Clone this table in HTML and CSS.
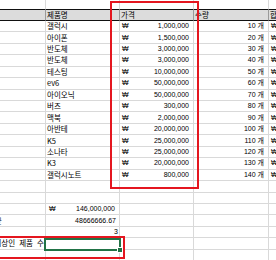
FILE: index.html
```html
<!DOCTYPE html>
<html lang="ko">
<head>
<meta charset="utf-8">
<link rel="stylesheet" href="styles.css">
</head>
<body>
<div class="wrap">
  <div class="sheet">
    <div class="c t"></div><div class="c t"></div><div class="c t"></div><div class="c t"></div><div class="c t"></div>

    <div class="c h"></div><div class="c h k">제품명</div><div class="c h k">가격</div><div class="c h k">수량</div><div class="c h k">합</div>

    <div class="c"></div><div class="c k">갤럭시</div><div class="c acc"><span>₩</span><span>1,000,000</span></div><div class="c qty">10 개</div><div class="c w">₩</div>
    <div class="c"></div><div class="c k">아이폰</div><div class="c acc"><span>₩</span><span>1,500,000</span></div><div class="c qty">20 개</div><div class="c w">₩</div>
    <div class="c"></div><div class="c k">반도체</div><div class="c acc"><span>₩</span><span>3,000,000</span></div><div class="c qty">30 개</div><div class="c w">₩</div>
    <div class="c"></div><div class="c k">반도체</div><div class="c acc"><span>₩</span><span>3,000,000</span></div><div class="c qty">40 개</div><div class="c w">₩</div>
    <div class="c"></div><div class="c k">테스팅</div><div class="c acc"><span>₩</span><span>10,000,000</span></div><div class="c qty">50 개</div><div class="c w">₩</div>
    <div class="c"></div><div class="c k">ev6</div><div class="c acc"><span>₩</span><span>50,000,000</span></div><div class="c qty">60 개</div><div class="c w">₩</div>
    <div class="c"></div><div class="c k">아이오닉</div><div class="c acc"><span>₩</span><span>50,000,000</span></div><div class="c qty">70 개</div><div class="c w">₩</div>
    <div class="c"></div><div class="c k">버즈</div><div class="c acc"><span>₩</span><span>300,000</span></div><div class="c qty">80 개</div><div class="c w">₩</div>
    <div class="c"></div><div class="c k">맥북</div><div class="c acc"><span>₩</span><span>2,000,000</span></div><div class="c qty">90 개</div><div class="c w">₩</div>
    <div class="c"></div><div class="c k">아반테</div><div class="c acc"><span>₩</span><span>20,000,000</span></div><div class="c qty">100 개</div><div class="c w">₩</div>
    <div class="c"></div><div class="c k">K5</div><div class="c acc"><span>₩</span><span>25,000,000</span></div><div class="c qty">110 개</div><div class="c w">₩</div>
    <div class="c"></div><div class="c k">소나타</div><div class="c acc"><span>₩</span><span>25,000,000</span></div><div class="c qty">120 개</div><div class="c w">₩</div>
    <div class="c"></div><div class="c k">K3</div><div class="c acc"><span>₩</span><span>20,000,000</span></div><div class="c qty">130 개</div><div class="c w">₩</div>
    <div class="c"></div><div class="c k">갤럭시노트</div><div class="c acc"><span>₩</span><span>800,000</span></div><div class="c qty">140 개</div><div class="c w">₩</div>

    <div class="c"></div><div class="c"></div><div class="c"></div><div class="c"></div><div class="c"></div>
    <div class="c"></div><div class="c"></div><div class="c"></div><div class="c"></div><div class="c"></div>

    <div class="c"></div><div class="c acc2"><span>₩</span><span>146,000,000</span></div><div class="c"></div><div class="c"></div><div class="c"></div>
    <div class="c"><span class="k cut">평균</span></div><div class="c num">48666666.67</div><div class="c"></div><div class="c"></div><div class="c"></div>
    <div class="c"></div><div class="c gen">3</div><div class="c"></div><div class="c"></div><div class="c"></div>
    <div class="c ra k wide">천만원 이상인 제품 수</div><div class="c"></div><div class="c"></div><div class="c"></div><div class="c"></div>
    <div class="c"></div><div class="c"></div><div class="c"></div><div class="c"></div><div class="c"></div>
  </div>

  <div class="mark mark-price"></div>
  <div class="mark mark-count"></div>
  <div class="sel"><span class="handle"></span></div>
</div>
</body>
</html>
```

FILE: styles.css
```css
html, body {
  margin: 0;
  padding: 0;
  background: #fff;
}

body {
  width: 276px;
  height: 260px;
  overflow: hidden;
}

.wrap {
  position: relative;
  width: 276px;
  height: 260px;
  overflow: hidden;
  font-family: "Liberation Sans", "Noto Sans CJK KR", sans-serif;
  font-size: 7px;
  color: #000;
}

.sheet {
  display: grid;
  grid-template-columns: 46px 74px 74px 75px 74px;
  grid-template-rows: 11.5px;
  grid-auto-rows: 11.45px;
  margin-top: -2px;
  width: 343px;
}

.c {
  box-sizing: border-box;
  border-right: 1px solid #d9d9d9;
  border-bottom: 1px solid #d9d9d9;
  display: flex;
  align-items: center;
  white-space: nowrap;
  padding: 0 1px;
  min-width: 0;
  line-height: 10px;
}

.t {
  border-bottom-color: #111;
}

.h {
  background: #dcdcdc;
  border-bottom-color: #111;
  border-right-color: #9a9a9a;
  padding-left: 1px;
}

.k {
  font-family: "Noto Sans CJK KR", "Liberation Sans", sans-serif;
  font-size: 7.5px;
}

.acc {
  justify-content: space-between;
  padding: 0 4px 0 2px;
}

.acc2 {
  justify-content: space-between;
  padding: 0 4px 0 3px;
}

.qty {
  justify-content: flex-end;
  padding-right: 4px;
}

.num {
  justify-content: flex-end;
  padding-right: 3px;
}

.gen {
  justify-content: flex-end;
  padding-right: 1px;
}

.ra {
  justify-content: flex-end;
  padding-right: 1px;
}

.wide {
  word-spacing: 2px;
}

.w {
  padding-left: 2px;
}

.cut {
  margin-left: -13px;
  color: #2b3550;
}

.mark {
  position: absolute;
  box-sizing: border-box;
  border: 2px solid #e4161f;
}

.mark-price {
  left: 110px;
  top: 1px;
  width: 89px;
  height: 188px;
}

.mark-count {
  left: -6px;
  top: 236px;
  width: 131px;
  height: 23px;
}

.sel {
  position: absolute;
  box-sizing: border-box;
  left: 44px;
  top: 238px;
  width: 77px;
  height: 13px;
  border: 2px solid #217346;
}

.handle {
  position: absolute;
  right: -4px;
  bottom: -4px;
  width: 4px;
  height: 4px;
  background: #217346;
  border: 1px solid #fff;
}
```
